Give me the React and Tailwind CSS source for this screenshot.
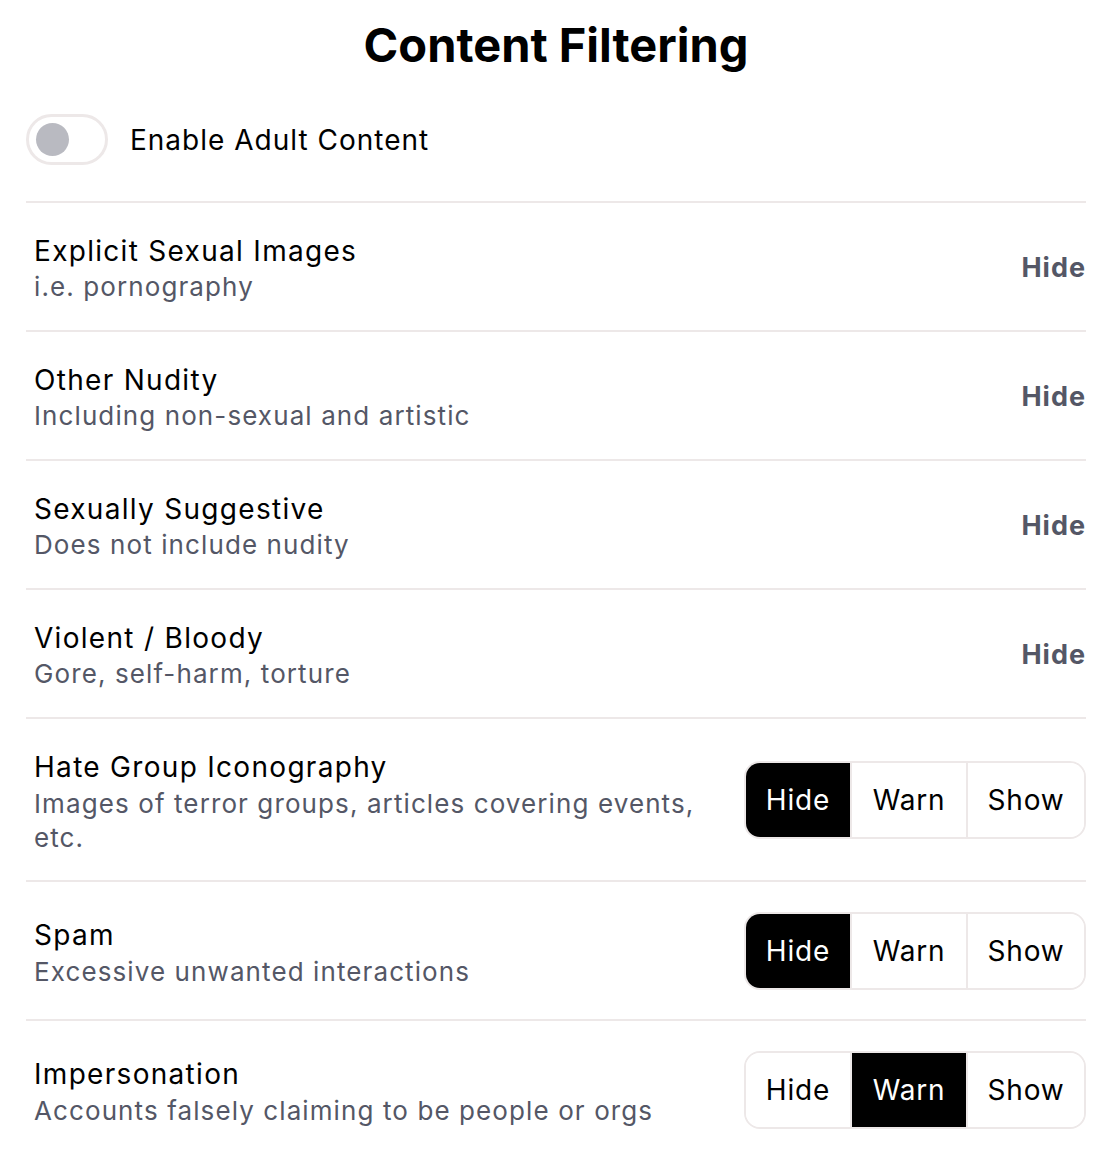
import React, { useState } from "react";

const font = { fontFamily: "Inter, 'Noto Sans', sans-serif" };

const fixedRows = [
  { title: "Explicit Sexual Images", desc: "i.e. pornography" },
  { title: "Other Nudity", desc: "Including non-sexual and artistic" },
  { title: "Sexually Suggestive", desc: "Does not include nudity" },
  { title: "Violent / Bloody", desc: "Gore, self-harm, torture" },
];

const choiceRows = [
  { title: "Hate Group Iconography", desc: "Images of terror groups, articles covering events, etc.", value: "hide", h: "h-[163px]" },
  { title: "Spam", desc: "Excessive unwanted interactions", value: "hide", h: "h-[139px]" },
  { title: "Impersonation", desc: "Accounts falsely claiming to be people or orgs", value: "warn", h: "h-[139px]" },
];

const Segmented = ({ value, onChange }) => {
  const opts = [
    { id: "hide", label: "Hide", w: "w-[104px]" },
    { id: "warn", label: "Warn", w: "w-[116px]" },
    { id: "show", label: "Show", w: "w-[118px]" },
  ];
  return (
    <div className="flex shrink-0 h-[78px] border-2 border-[#ede8e8] rounded-[16px] overflow-hidden">
      {opts.map((o, i) => (
        <button
          key={o.id}
          onClick={() => onChange(o.id)}
          className={`${o.w} flex items-center justify-center text-[28px] tracking-[0.8px] ${
            i > 0 ? "border-l-2 border-[#ede8e8]" : ""
          } ${value === o.id ? "bg-black text-white" : "bg-white text-black"}`}
        >
          {o.label}
        </button>
      ))}
    </div>
  );
};

const App = () => {
  const [adult, setAdult] = useState(false);
  const [values, setValues] = useState(choiceRows.map((r) => r.value));

  return (
    <div className="min-h-screen bg-white pl-[26px] pr-[22px] pb-6" style={font}>
      {/* header */}
      <h1 className="text-center font-bold text-[47px] leading-none pt-[21px] pb-[46px] text-black">
        Content Filtering
      </h1>

      <div className="flex items-center gap-[22px] pb-[36px]">
        <button
          onClick={() => setAdult(!adult)}
          className={`w-[82px] h-[51px] rounded-full border-[3px] border-[#ede8e8] flex items-center px-[7px] ${
            adult ? "justify-end bg-black" : "justify-start bg-white"
          }`}
        >
          <span className="w-[33px] h-[33px] rounded-full bg-[#b9bac1]" />
        </button>
        <span className="text-[28px] tracking-[1px] text-black">Enable Adult Content</span>
      </div>

      {/* fixed rows */}
      {fixedRows.map((r) => (
        <div key={r.title} className="flex items-center justify-between border-t-2 border-[#ede8e8] h-[129px] pt-[3px] pl-2">
          <div className="flex flex-col gap-[4px] mt-[2px]">
            <span className="text-[28px] leading-[32px] tracking-[1.3px] text-black">{r.title}</span>
            <span className="text-[26px] leading-[32px] tracking-[1.1px] text-[#545766]">{r.desc}</span>
          </div>
          <span className="text-[27px] font-bold tracking-[1px] text-[#545766]">Hide</span>
        </div>
      ))}

      {/* choice rows */}
      {choiceRows.map((r, idx) => (
        <div key={r.title} className={`flex items-center justify-between gap-10 border-t-2 border-[#ede8e8] pl-2 ${r.h}`}>
          <div className="flex flex-col gap-[4px] max-w-[680px] mt-[6px]">
            <span className="text-[28px] leading-[32px] tracking-[1.3px] text-black">{r.title}</span>
            <span className="text-[26px] leading-[34px] tracking-[1.1px] text-[#545766]">{r.desc}</span>
          </div>
          <Segmented
            value={values[idx]}
            onChange={(v) => setValues(values.map((x, j) => (j === idx ? v : x)))}
          />
        </div>
      ))}
    </div>
  );
};

export default App;
